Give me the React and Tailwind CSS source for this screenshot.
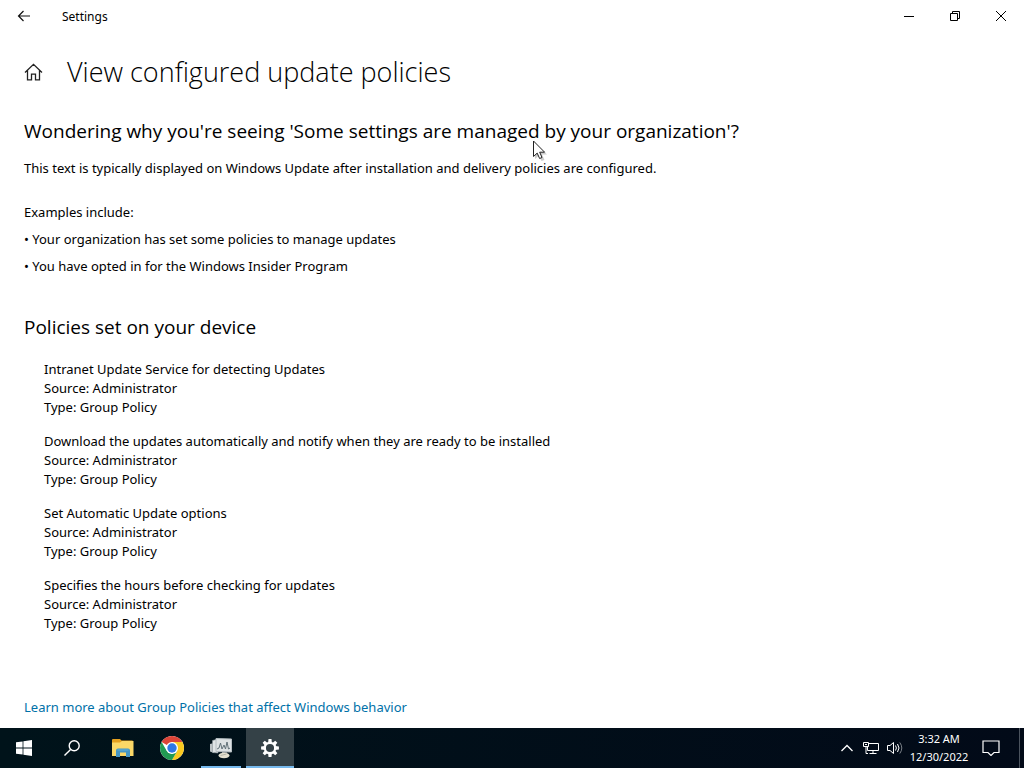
const policies = [
  "Intranet Update Service for detecting Updates",
  "Download the updates automatically and notify when they are ready to be installed",
  "Set Automatic Update options",
  "Specifies the hours before checking for updates",
];

const examples = [
  "Your organization has set some policies to manage updates",
  "You have opted in for the Windows Insider Program",
];

function TitleBar() {
  return (
    <header className="flex h-8 items-center">
      <button aria-label="Back" className="flex h-8 w-12 items-center justify-center">
        <svg width="14" height="12" viewBox="0 0 14 12" fill="none" stroke="#111" strokeWidth="1.2">
          <path d="M13 6H1.5M6.5 1L1.5 6l5 5" />
        </svg>
      </button>
      <span className="ml-3.5 flex-1 pt-px text-xs">Settings</span>
      <button aria-label="Minimize" className="flex h-8 w-[46px] items-center justify-center">
        <svg width="10" height="10" viewBox="0 0 10 10" fill="none" stroke="#000">
          <path d="M0 5.5h10" />
        </svg>
      </button>
      <button aria-label="Restore" className="flex h-8 w-[46px] items-center justify-center">
        <svg width="10" height="10" viewBox="0 0 10 10" fill="none" stroke="#000">
          <path d="M.5 2.5h7v7h-7zM2.5 2.5v-2h7v7h-2" />
        </svg>
      </button>
      <button aria-label="Close" className="flex h-8 w-[46px] items-center justify-center">
        <svg width="10" height="10" viewBox="0 0 10 10" fill="none" stroke="#000">
          <path d="M0 0l10 10M10 0L0 10" />
        </svg>
      </button>
    </header>
  );
}

function HomeIcon() {
  return (
    <svg width="19" height="18" viewBox="0 0 19 18" fill="none" stroke="#222" strokeWidth="1.3">
      <path d="M1 9.500L9.500 1.300 18 9.500M3.500 7.500v9.300h4v-5.600h4v5.600h4V7.500" />
    </svg>
  );
}

function StartIcon() {
  return (
    <svg width="16" height="16" viewBox="0 0 16 16" fill="#fff">
      <path d="M0 2.300L6.600 1.400v6.200H0zM7.400 1.300L16 0v7.600H7.400zM0 8.400h6.600v6.200L0 13.700zM7.400 8.400H16V16l-8.600-1.300z" />
    </svg>
  );
}

function SearchIcon() {
  return (
    <svg width="16" height="16" viewBox="0 0 16 16" fill="none" stroke="#fff" strokeWidth="1.4">
      <circle cx="10.200" cy="5.800" r="5" />
      <path d="M6.600 9.400L.5 15.500" />
    </svg>
  );
}

function ExplorerIcon() {
  return (
    <svg width="22" height="18" viewBox="0 0 22 18">
      <path d="M0 1q0-1 1-1h7l1.500 1.500H20q1 0 1 1V5H0z" fill="#e4a01f" />
      <path d="M0 3.500h8l2-1.500h11.500V17H0z" fill="#fbd867" />
      <path d="M4 18v-6.500Q4 9.500 6 9.500h10q2 0 2 2V18h-4v-4.500H8V18z" fill="#4596c4" />
      <path d="M5.500 11h11" stroke="#62b0d8" />
    </svg>
  );
}

function ChromeIcon() {
  return (
    <svg width="24" height="24" viewBox="0 0 24 24">
      <circle cx="12" cy="12" r="12" fill="#fff" />
      <path d="M12 12L1.610 6A12 12 0 0 1 22.390 6H12z" fill="#dc4437" />
      <path d="M12 6h10.390A12 12 0 0 1 12 24l5.200-9z" fill="#fbc91f" />
      <path d="M6.800 15L1.610 6A12 12 0 0 0 12 24l5.200-9L12 18z" fill="#219a52" />
      <circle cx="12" cy="12" r="6" fill="#fff" />
      <circle cx="12" cy="12" r="4.700" fill="#2f77e5" />
    </svg>
  );
}

function MonitorIcon() {
  return (
    <svg width="24" height="22" viewBox="0 0 24 22">
      <path d="M1 7l4-1v10l-4-1.500z" fill="#b9c0c3" />
      <path d="M3.500 3.500L9 2v14l-5.500-.5z" fill="#dfe4e6" stroke="#8b969b" strokeWidth=".6" />
      <path d="M7 1.500L22.500 2v13L7 14.500z" fill="#dde2e4" stroke="#b4bcc0" />
      <path d="M8 12l2-1 1.500-5 1.500 6 2-4 1.500 4 1.500-7 1.500 7 1.500-1" fill="none" stroke="#607078" />
      <path d="M13 15l5 .2v2.300h-5z" fill="#a6adaf" />
      <ellipse cx="15" cy="18.500" rx="5.500" ry="2.800" fill="#e4e0cf" />
      <path d="M11.500 18.500l6-1.500" stroke="#b5b4a8" />
    </svg>
  );
}

function GearIcon() {
  return (
    <svg width="18" height="18" viewBox="-9 -9 18 18">
      <g fill="#fff">
        {[0, 45, 90, 135].map((a) => (
          <path key={a} d="M-1.500-8.900h3l.4 4h-3.800zM-1.500 8.900h3l.4-4h-3.800z" transform={`rotate(${a})`} />
        ))}
      </g>
      <circle r="5.200" fill="none" stroke="#fff" strokeWidth="2.300" />
    </svg>
  );
}

function TaskButton({ label, state, children }) {
  const look =
    state === "active"
      ? "border-[#76b9ed] bg-[#344147]"
      : "border-transparent";
  return (
    <button aria-label={label} className={`relative flex h-10 w-12 items-center justify-center border-b-2 pt-0.5 ${look}`}>
      {children}
      {state === "open" && <span className="absolute -bottom-0.5 h-0.5 w-10 bg-[#76b9ed]" />}
    </button>
  );
}

function Taskbar() {
  return (
    <footer className="flex h-10 items-center bg-linear-to-r from-[#00131a] to-[#020a18] text-white">
      <div className="flex flex-1 gap-[3px]">
        <div className="flex">
          <TaskButton label="Start"><StartIcon /></TaskButton>
          <TaskButton label="Search"><SearchIcon /></TaskButton>
        </div>
        <div className="flex gap-px">
          <TaskButton label="File Explorer"><ExplorerIcon /></TaskButton>
          <TaskButton label="Google Chrome"><ChromeIcon /></TaskButton>
          <TaskButton label="Resource Monitor" state="open"><MonitorIcon /></TaskButton>
          <TaskButton label="Settings" state="active"><GearIcon /></TaskButton>
        </div>
      </div>
      <button aria-label="Show hidden icons" className="flex h-10 w-6 items-center justify-center">
        <svg width="12" height="8" viewBox="0 0 12 8" fill="none" stroke="#fff" strokeWidth="1.300">
          <path d="M.5 7L6 1.500 11.500 7" />
        </svg>
      </button>
      <button aria-label="Network" className="flex h-10 w-6 items-center justify-center">
        <svg width="16" height="14" viewBox="0 0 16 14" fill="none" stroke="#fff">
          <path d="M6 2.500h9.500v7h-11V6M10 9.500v3M6.500 12.500h7M.5 1.500h5v4h-5zM3 5.500v7h2M2 3.500h2" />
        </svg>
      </button>
      <button aria-label="Volume" className="flex h-10 w-6 items-center justify-center">
        <svg width="16" height="14" viewBox="0 0 16 14" fill="none" stroke="#fff">
          <path d="M.5 4.500h2.500l3.500-3v11l-3.500-3H.5z" />
          <path d="M8.500 4.500q1.800 2.500 0 5M10.500 3q3 4 0 8" />
          <path d="M12.800 1.500q4 5.500 0 11" stroke="#7b8188" />
        </svg>
      </button>
      <button className="w-16 text-center text-[11px] leading-[18px]">
        3:32 AM
        <br />
        12/30/2022
      </button>
      <button aria-label="Notifications" className="flex h-10 w-12 items-center pl-[11px]">
        <svg width="18" height="16" viewBox="0 0 18 16" fill="none" stroke="#fff" strokeWidth="1.200">
          <path d="M1 1h16v11.500h-5l-3 3-3-3H1z" />
        </svg>
      </button>
      <button aria-label="Show desktop" className="h-10 w-[5px] border-l border-[#4b535e]" />
    </footer>
  );
}

export default function App() {
  return (
    <div className="relative flex min-h-screen flex-col bg-white font-['Noto_Sans','Open_Sans',sans-serif] text-black">
      <TitleBar />
      <main className="flex-1 px-6 pt-5 text-[13px] leading-[19px]">
        <div className="flex items-center gap-6">
          <a href="#home" aria-label="Home"><HomeIcon /></a>
          <h1 className="font-['Open_Sans',sans-serif] text-[27px] leading-10 font-light">View configured update policies</h1>
        </div>
        <h2 className="mt-[25px] font-['Open_Sans',sans-serif] text-[19px] leading-7">
          Wondering why you're seeing 'Some settings are managed by your organization'?
        </h2>
        <p className="mt-3.5">
          This text is typically displayed on Windows Update after installation and delivery policies are configured.
        </p>
        <p className="mt-[25px]">Examples include:</p>
        <ul>
          {examples.map((text) => (
            <li key={text} className="mt-2">• {text}</li>
          ))}
        </ul>
        <h2 className="mt-[37px] font-['Open_Sans',sans-serif] text-[19px] leading-7">Policies set on your device</h2>
        <ul className="mt-[19px] flex flex-col gap-[15px] pl-5">
          {policies.map((name) => (
            <li key={name}>
              <p>{name}</p>
              <p>Source: Administrator</p>
              <p>Type: Group Policy</p>
            </li>
          ))}
        </ul>
        <a href="#policies" className="mt-[65px] mb-1 inline-block text-[#0071a8]">
          Learn more about Group Policies that affect Windows behavior
        </a>
      </main>
      <Taskbar />
      <svg className="absolute top-[140px] left-[533px]" width="15" height="22" viewBox="0 0 15 22">
        <path d="M2 3v16l4-3.500 2.500 5.500 3-1-2.500-5.500h5z" fill="#0003" />
        <path d="M.5 1v15.500l3.700-3.400 2.400 5.400 2.400-1-2.300-5.300h4.900z" fill="#fff" stroke="#222" />
      </svg>
    </div>
  );
}
